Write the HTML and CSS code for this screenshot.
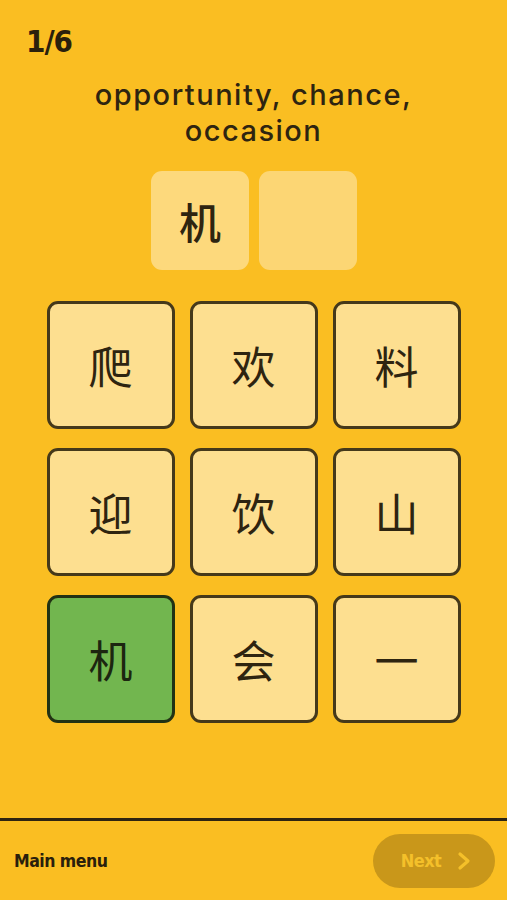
FILE: index.html
```html
<!DOCTYPE html>
<html lang="en">
<head>
<meta charset="utf-8">
<title>Quiz</title>
<link rel="stylesheet" href="styles.css">
</head>
<body>
<div class="app">
  <main class="main">
    <div class="progress">1/6</div>
    <h1 class="prompt">opportunity, chance,<br>occasion</h1>
    <div class="answer">
      <div class="slot filled">机</div>
      <div class="slot"></div>
    </div>
    <div class="grid">
      <button class="tile">爬</button>
      <button class="tile">欢</button>
      <button class="tile">料</button>
      <button class="tile">迎</button>
      <button class="tile">饮</button>
      <button class="tile">山</button>
      <button class="tile correct">机</button>
      <button class="tile">会</button>
      <button class="tile">一</button>
    </div>
  </main>
  <footer class="footer">
    <span class="menu-link">Main menu</span>
    <button class="next" disabled>
      <span>Next</span>
      <svg class="chev" width="14" height="20" viewBox="0 0 14 20"><path d="M3 3 L11 10 L3 17" fill="none" stroke="currentColor" stroke-width="3.2" stroke-linecap="round" stroke-linejoin="round"/></svg>
    </button>
  </footer>
</div>
</body>
</html>
```

FILE: styles.css
```css
* { box-sizing: border-box; }
html, body { margin: 0; padding: 0; }
body {
  background: #fabe22;
  color: #2e2410;
  font-family: "Noto Sans CJK SC", sans-serif;
}
.app {
  width: 507px;
  height: 900px;
  display: flex;
  flex-direction: column;
}
.main {
  flex: 1;
  display: flex;
  flex-direction: column;
  align-items: center;
}
.progress {
  align-self: flex-start;
  margin: 27px 0 0 26px;
  font-family: "DejaVu Sans Condensed", "DejaVu Sans", sans-serif;
  font-stretch: condensed;
  font-weight: bold;
  font-size: 31px;
  line-height: 28px;
  letter-spacing: -1px;
  color: #2a200c;
}
.prompt {
  margin: 22px 0 0;
  font-family: "Inter", "Open Sans", sans-serif;
  font-weight: 500;
  font-size: 29px;
  line-height: 36px;
  text-align: center;
  color: #2e2410;
  letter-spacing: 1.5px;
}
.answer {
  margin-top: 22px;
  display: flex;
  gap: 10px;
  margin-left: 1px;
}
.slot {
  width: 98px;
  height: 99px;
  border-radius: 11px;
  background: #fcd674;
  display: flex;
  align-items: center;
  justify-content: center;
  font-size: 42px;
  font-weight: 500;
  color: #2e2410;
}
.slot.filled { background: #fdd97c; }
.grid {
  margin-top: 31px;
  display: grid;
  grid-template-columns: repeat(3, 128px);
  grid-auto-rows: 128px;
  column-gap: 15px;
  row-gap: 19px;
}
.tile {
  margin: 0;
  padding: 0;
  border: 3px solid #45391a;
  border-radius: 11px;
  background: #fddf90;
  font-family: "Noto Sans CJK SC", sans-serif;
  font-size: 44px;
  font-weight: 400;
  color: #2e2410;
  display: flex;
  align-items: center;
  justify-content: center;
}
.tile.correct {
  background: #72b64f;
  border-color: #223214;
  color: #1c2610;
}
.footer {
  height: 82px;
  border-top: 3px solid #2e2410;
  display: flex;
  align-items: center;
  justify-content: space-between;
  padding: 0 12px 0 14px;
}
.menu-link {
  font-family: "DejaVu Sans Condensed", "DejaVu Sans", sans-serif;
  font-stretch: condensed;
  font-weight: bold;
  font-size: 17.5px;
  color: #2a200c;
  letter-spacing: -0.5px;
}
.next {
  width: 122px;
  height: 54px;
  border: none;
  border-radius: 27px;
  background: #c9971a;
  color: #f4c02a;
  display: flex;
  align-items: center;
  justify-content: center;
  gap: 16px;
  padding: 0 0 0 4px;
  font-family: "DejaVu Sans Condensed", "DejaVu Sans", sans-serif;
  font-stretch: condensed;
  font-weight: bold;
  font-size: 18px;
  letter-spacing: -0.5px;
}
.chev { display: block; }
```
